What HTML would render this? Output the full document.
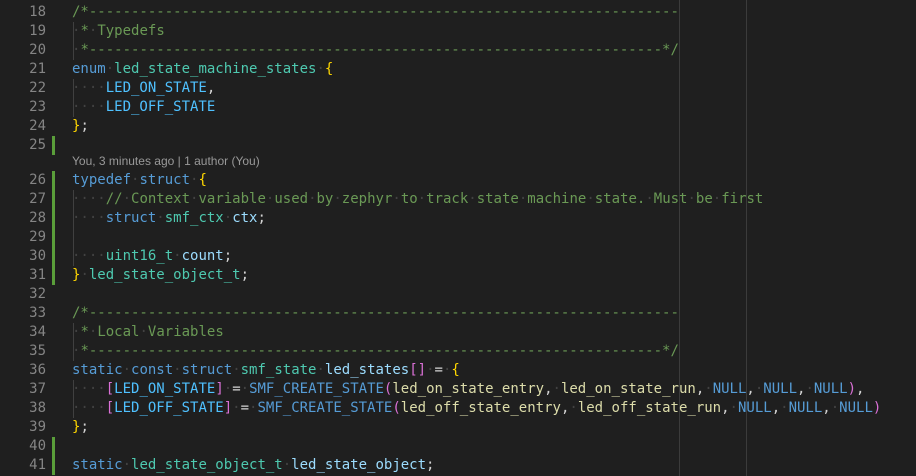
<!DOCTYPE html>
<html><head><meta charset="utf-8"><style>
html,body{margin:0;padding:0;background:#1f1f1f;width:916px;height:476px;overflow:hidden}
#ed{position:relative;width:916px;height:476px;font-family:"DejaVu Sans Mono","Liberation Mono",monospace;font-size:14px;color:#d4d4d4}
.r{position:absolute;left:0;height:19px;line-height:19px;width:916px;white-space:pre;margin-top:1px}
.n{position:absolute;left:0;width:46px;text-align:right;color:#858585}
.x{position:absolute;left:72px}
.g{position:absolute;left:52px;width:3px;height:19px;background:#5a9e3a}
.ig{position:absolute;left:73px;width:1px;height:19px;background:#404040}
.k{color:#569cd6}.t{color:#4ec9b0}.c{color:#6a9955}.v{color:#9cdcfe}.e{color:#4fc1ff}.f{color:#dcdcaa}.y{color:#ffd700}.p{color:#da70d6}.d{color:#424242}
.ru{position:absolute;top:0;width:1px;height:476px;background:#3b3b3b}
.lens{position:absolute;left:72px;top:153px;font-family:"Liberation Sans",sans-serif;font-size:12px;color:#999;line-height:16px}
</style></head><body><div id="ed">
<div class="ru" style="left:679px"></div><div class="ru" style="left:746px"></div>

<div class="r" style="top:2px"><span class="n">18</span><span class="x c">/*----------------------------------------------------------------------</span></div>
<div class="r" style="top:21px"><span class="n">19</span><span class="ig"></span><span class="x c"><span class="d">·</span>*<span class="d">·</span>Typedefs</span></div>
<div class="r" style="top:40px"><span class="n">20</span><span class="ig"></span><span class="x c"><span class="d">·</span>*--------------------------------------------------------------------*/</span></div>
<div class="r" style="top:59px"><span class="n">21</span><span class="x"><span class="k">enum</span><span class="d">·</span><span class="t">led_state_machine_states</span><span class="d">·</span><span class="y">{</span></span></div>
<div class="r" style="top:78px"><span class="n">22</span><span class="ig"></span><span class="x"><span class="d">····</span><span class="e">LED_ON_STATE</span>,</span></div>
<div class="r" style="top:97px"><span class="n">23</span><span class="ig"></span><span class="x"><span class="d">····</span><span class="e">LED_OFF_STATE</span></span></div>
<div class="r" style="top:116px"><span class="n">24</span><span class="x"><span class="y">}</span>;</span></div>
<div class="r" style="top:135px"><span class="n">25</span><span class="g"></span></div>
<div class="lens">You, 3 minutes ago | 1 author (You)</div>
<div class="r" style="top:170px"><span class="n">26</span><span class="g"></span><span class="x"><span class="k">typedef</span><span class="d">·</span><span class="k">struct</span><span class="d">·</span><span class="y">{</span></span></div>
<div class="r" style="top:189px"><span class="n">27</span><span class="g"></span><span class="ig"></span><span class="x"><span class="d">····</span><span class="c">//<span class="d">·</span>Context<span class="d">·</span>variable<span class="d">·</span>used<span class="d">·</span>by<span class="d">·</span>zephyr<span class="d">·</span>to<span class="d">·</span>track<span class="d">·</span>state<span class="d">·</span>machine<span class="d">·</span>state.<span class="d">·</span>Must<span class="d">·</span>be<span class="d">·</span>first</span></span></div>
<div class="r" style="top:208px"><span class="n">28</span><span class="g"></span><span class="ig"></span><span class="x"><span class="d">····</span><span class="k">struct</span><span class="d">·</span><span class="t">smf_ctx</span><span class="d">·</span><span class="v">ctx</span>;</span></div>
<div class="r" style="top:227px"><span class="n">29</span><span class="g"></span><span class="ig"></span></div>
<div class="r" style="top:246px"><span class="n">30</span><span class="g"></span><span class="ig"></span><span class="x"><span class="d">····</span><span class="t">uint16_t</span><span class="d">·</span><span class="v">count</span>;</span></div>
<div class="r" style="top:265px"><span class="n">31</span><span class="g"></span><span class="x"><span class="y">}</span><span class="d">·</span><span class="t">led_state_object_t</span>;</span></div>
<div class="r" style="top:284px"><span class="n">32</span></div>
<div class="r" style="top:303px"><span class="n">33</span><span class="x c">/*----------------------------------------------------------------------</span></div>
<div class="r" style="top:322px"><span class="n">34</span><span class="ig"></span><span class="x c"><span class="d">·</span>*<span class="d">·</span>Local<span class="d">·</span>Variables</span></div>
<div class="r" style="top:341px"><span class="n">35</span><span class="ig"></span><span class="x c"><span class="d">·</span>*--------------------------------------------------------------------*/</span></div>
<div class="r" style="top:360px"><span class="n">36</span><span class="x"><span class="k">static</span><span class="d">·</span><span class="k">const</span><span class="d">·</span><span class="k">struct</span><span class="d">·</span><span class="t">smf_state</span><span class="d">·</span><span class="v">led_states</span><span class="p">[]</span><span class="d">·</span>=<span class="d">·</span><span class="y">{</span></span></div>
<div class="r" style="top:379px"><span class="n">37</span><span class="ig"></span><span class="x"><span class="d">····</span><span class="p">[</span><span class="e">LED_ON_STATE</span><span class="p">]</span><span class="d">·</span>=<span class="d">·</span><span class="k">SMF_CREATE_STATE</span><span class="p">(</span><span class="f">led_on_state_entry</span>,<span class="d">·</span><span class="f">led_on_state_run</span>,<span class="d">·</span><span class="k">NULL</span>,<span class="d">·</span><span class="k">NULL</span>,<span class="d">·</span><span class="k">NULL</span><span class="p">)</span>,</span></div>
<div class="r" style="top:398px"><span class="n">38</span><span class="ig"></span><span class="x"><span class="d">····</span><span class="p">[</span><span class="e">LED_OFF_STATE</span><span class="p">]</span><span class="d">·</span>=<span class="d">·</span><span class="k">SMF_CREATE_STATE</span><span class="p">(</span><span class="f">led_off_state_entry</span>,<span class="d">·</span><span class="f">led_off_state_run</span>,<span class="d">·</span><span class="k">NULL</span>,<span class="d">·</span><span class="k">NULL</span>,<span class="d">·</span><span class="k">NULL</span><span class="p">)</span></span></div>
<div class="r" style="top:417px"><span class="n">39</span><span class="x"><span class="y">}</span>;</span></div>
<div class="r" style="top:436px"><span class="n">40</span><span class="g"></span></div>
<div class="r" style="top:455px"><span class="n">41</span><span class="g"></span><span class="x"><span class="k">static</span><span class="d">·</span><span class="t">led_state_object_t</span><span class="d">·</span><span class="v">led_state_object</span>;</span></div>
</div></body></html>
